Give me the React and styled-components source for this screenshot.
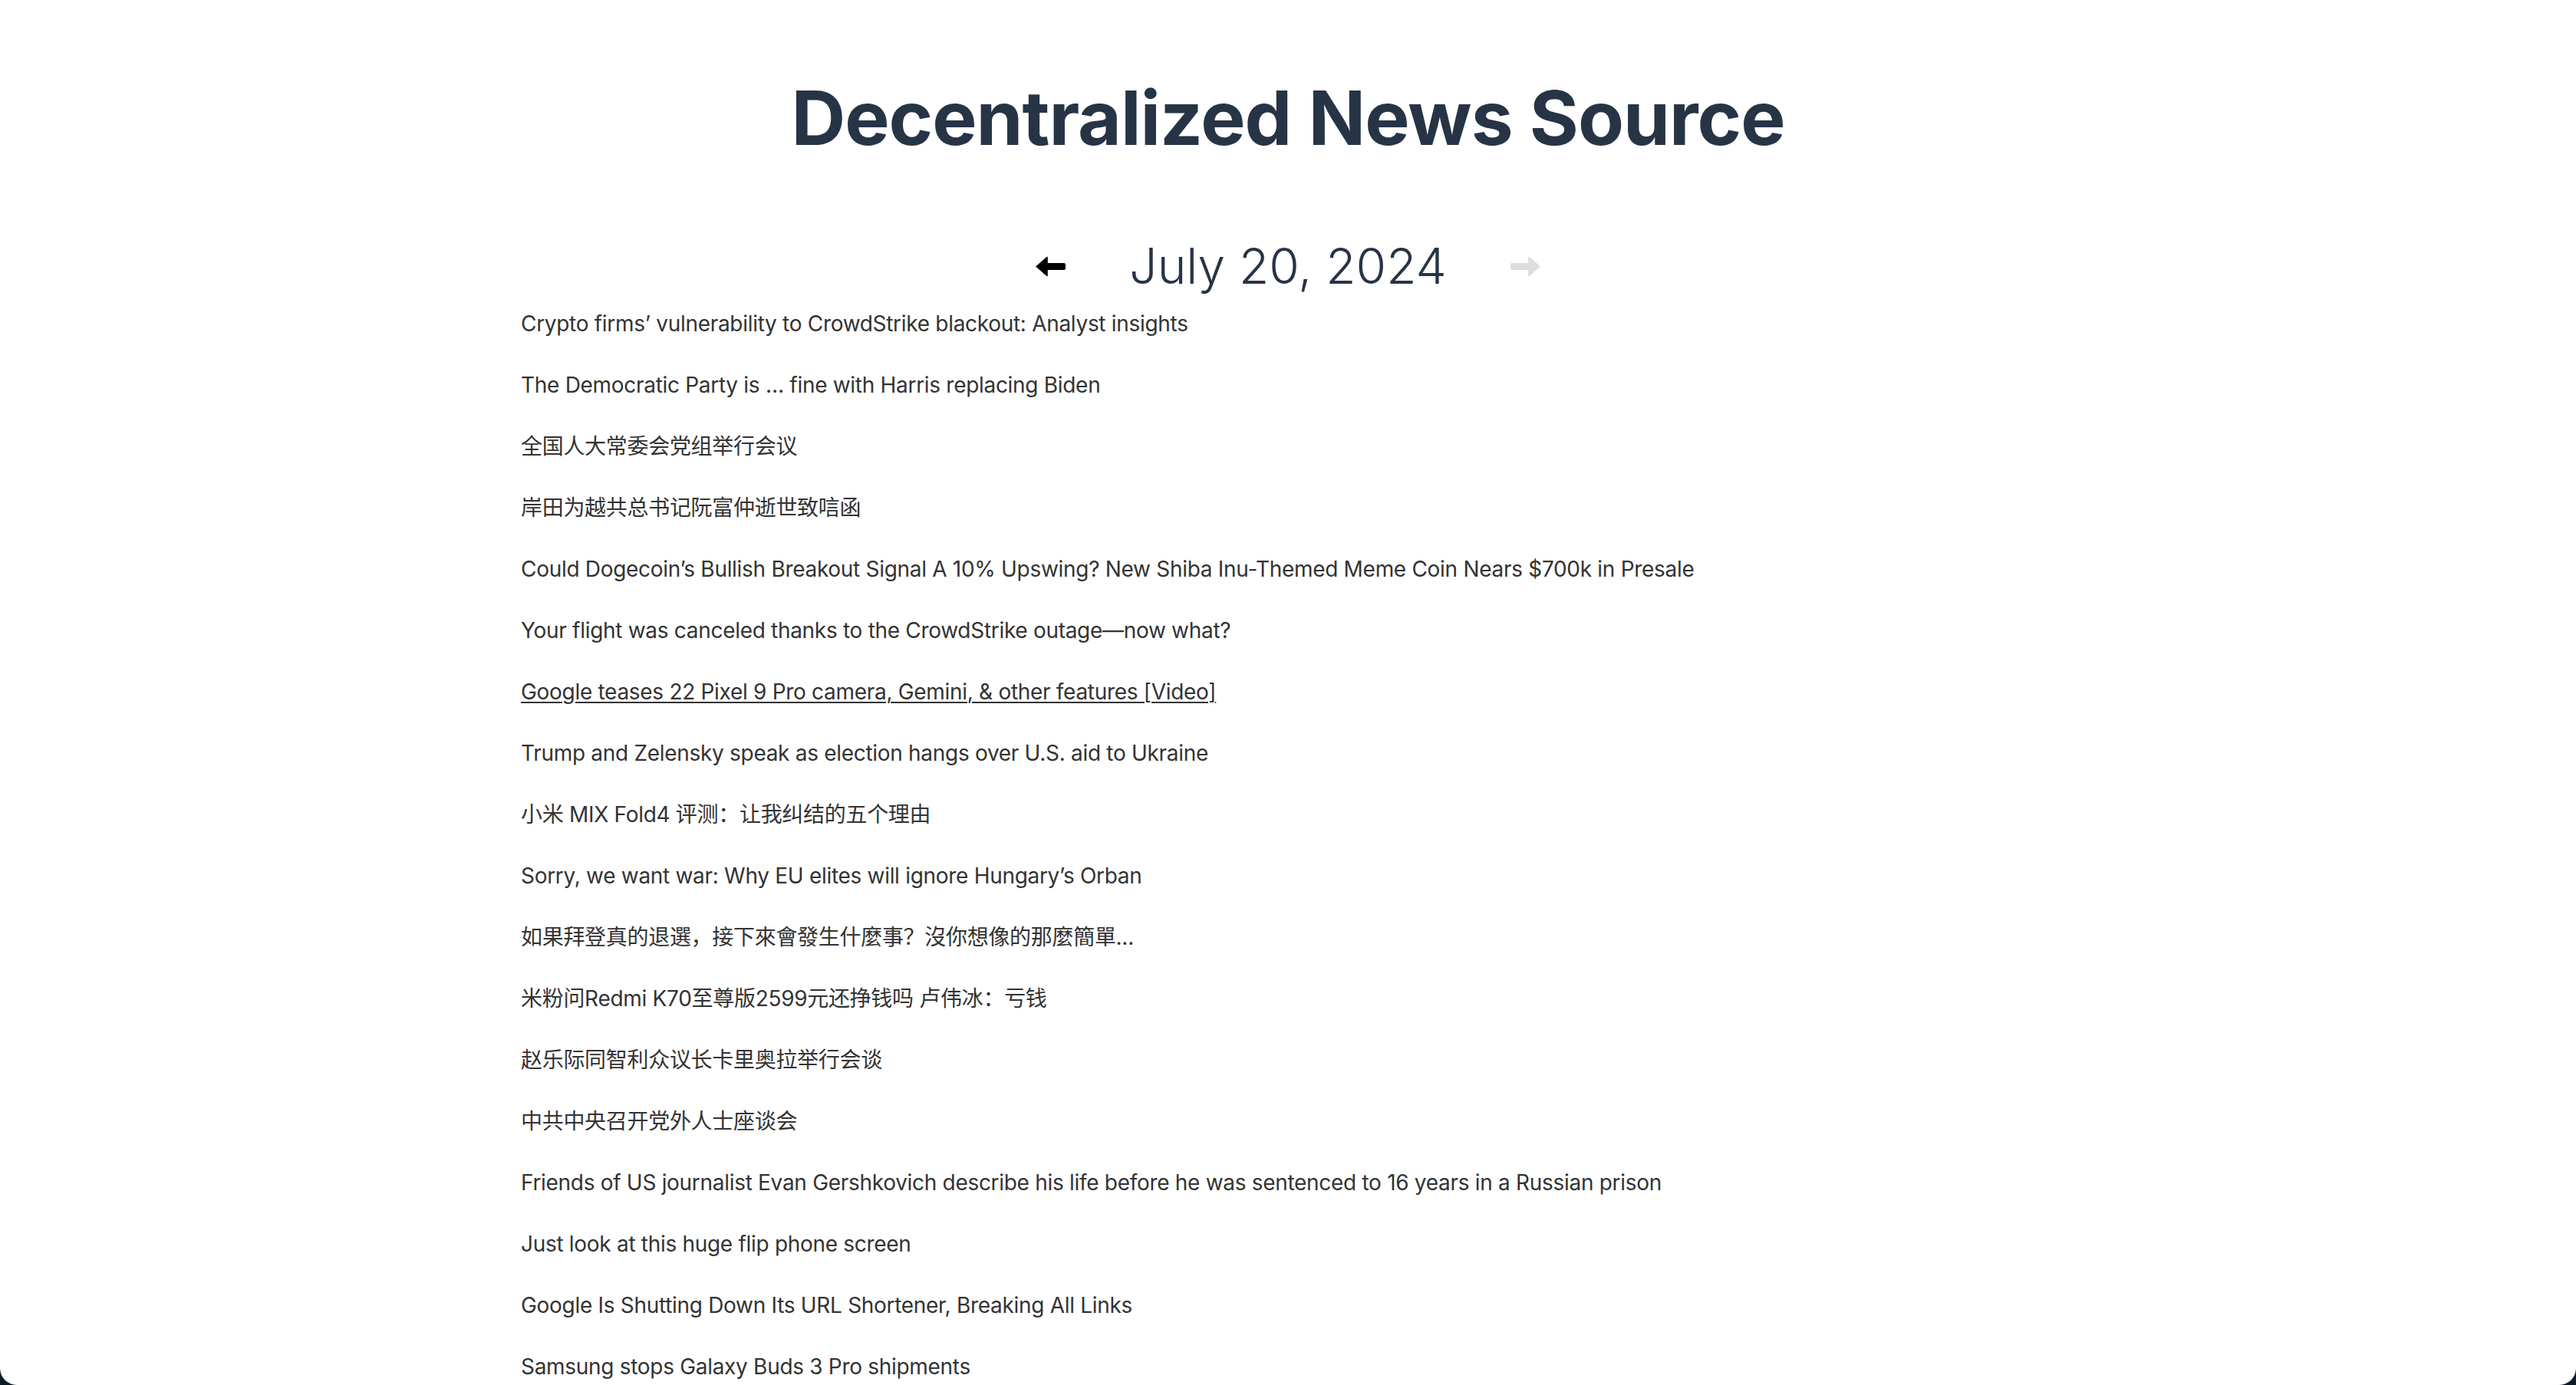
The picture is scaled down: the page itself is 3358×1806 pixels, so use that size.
import React from "react";
import styled, { createGlobalStyle } from "styled-components";

const GlobalStyle = createGlobalStyle`
  html, body {
    margin: 0;
    padding: 0;
    background: #0d1b2a;
  }
  * { box-sizing: border-box; }
`;

const Page = styled.div`
  height: 100vh;
  overflow: hidden;
  background: #ffffff;
  border-bottom-left-radius: 22px;
  border-bottom-right-radius: 22px;
  padding-top: 105px;
  font-family: Inter, "Noto Sans", "Noto Sans CJK SC", sans-serif;
`;

const Title = styled.h1`
  margin: 0;
  text-align: center;
  font-size: 98px;
  line-height: 1;
  font-weight: 700;
  letter-spacing: -1px;
  color: #263446;
`;

const DateBar = styled.div`
  display: flex;
  justify-content: center;
  align-items: center;
  gap: 83px;
  margin-top: 112px;
`;

const DateLabel = styled.h2`
  margin: 0;
  font-size: 64px;
  line-height: 1;
  font-weight: 300;
  color: #263446;
`;

const ArrowButton = styled.button`
  display: flex;
  align-items: center;
  padding: 0;
  border: none;
  background: none;
  cursor: ${(p) => (p.disabled ? "default" : "pointer")};
  color: ${(p) => (p.disabled ? "#dddddd" : "#000000")};
`;

const NewsList = styled.ul`
  list-style: none;
  width: 2000px;
  margin: 23px auto 0;
  padding: 0;
`;

const NewsItem = styled.li`
  font-size: 28px;
  line-height: 40px;
  letter-spacing: -0.3px;
  margin-bottom: 40px;
  font-family: Inter, "Noto Sans CJK SC", sans-serif;
`;

const NewsLink = styled.a`
  color: #333333;
  text-decoration: ${(p) => (p.$hovered ? "underline" : "none")};
  text-underline-offset: 3px;
  text-decoration-thickness: 2px;
  &:hover {
    text-decoration: underline;
  }
`;

// heavy arrow, points left; flipped for the next-day button
function Arrow({ flip }) {
  return (
    <svg
      width="40"
      height="27"
      viewBox="0 0 40 27"
      style={flip ? { transform: "scaleX(-1)" } : undefined}
    >
      <path
        d="M1 13.5 L16 0.5 L16.8 1.5 L16.8 9 L38 9 Q40 9 40 11 L40 16 Q40 18 38 18 L16.8 18 L16.8 25.5 L16 26.5 Z"
        fill="currentColor"
      />
    </svg>
  );
}

const headlines = [
  "Crypto firms’ vulnerability to CrowdStrike blackout: Analyst insights",
  "The Democratic Party is … fine with Harris replacing Biden",
  "全国人大常委会党组举行会议",
  "岸田为越共总书记阮富仲逝世致唁函",
  "Could Dogecoin’s Bullish Breakout Signal A 10% Upswing? New Shiba Inu-Themed Meme Coin Nears $700k in Presale",
  "Your flight was canceled thanks to the CrowdStrike outage—now what?",
  "Google teases 22 Pixel 9 Pro camera, Gemini, & other features [Video]",
  "Trump and Zelensky speak as election hangs over U.S. aid to Ukraine",
  "小米 MIX Fold4 评测：让我纠结的五个理由",
  "Sorry, we want war: Why EU elites will ignore Hungary’s Orban",
  "如果拜登真的退選，接下來會發生什麼事？沒你想像的那麼簡單...",
  "米粉问Redmi K70至尊版2599元还挣钱吗 卢伟冰：亏钱",
  "赵乐际同智利众议长卡里奥拉举行会谈",
  "中共中央召开党外人士座谈会",
  "Friends of US journalist Evan Gershkovich describe his life before he was sentenced to 16 years in a Russian prison",
  "Just look at this huge flip phone screen",
  "Google Is Shutting Down Its URL Shortener, Breaking All Links",
  "Samsung stops Galaxy Buds 3 Pro shipments",
];

export default function App() {
  return (
    <>
      <GlobalStyle />
      <Page>
        <Title>Decentralized News Source</Title>
        <DateBar>
          <ArrowButton aria-label="Previous day">
            <Arrow />
          </ArrowButton>
          <DateLabel>July 20, 2024</DateLabel>
          <ArrowButton aria-label="Next day" disabled>
            <Arrow flip />
          </ArrowButton>
        </DateBar>
        <NewsList>
          {headlines.map((h, i) => (
            <NewsItem key={i}>
              <NewsLink href="#" $hovered={i === 6}>
                {h}
              </NewsLink>
            </NewsItem>
          ))}
        </NewsList>
      </Page>
    </>
  );
}
